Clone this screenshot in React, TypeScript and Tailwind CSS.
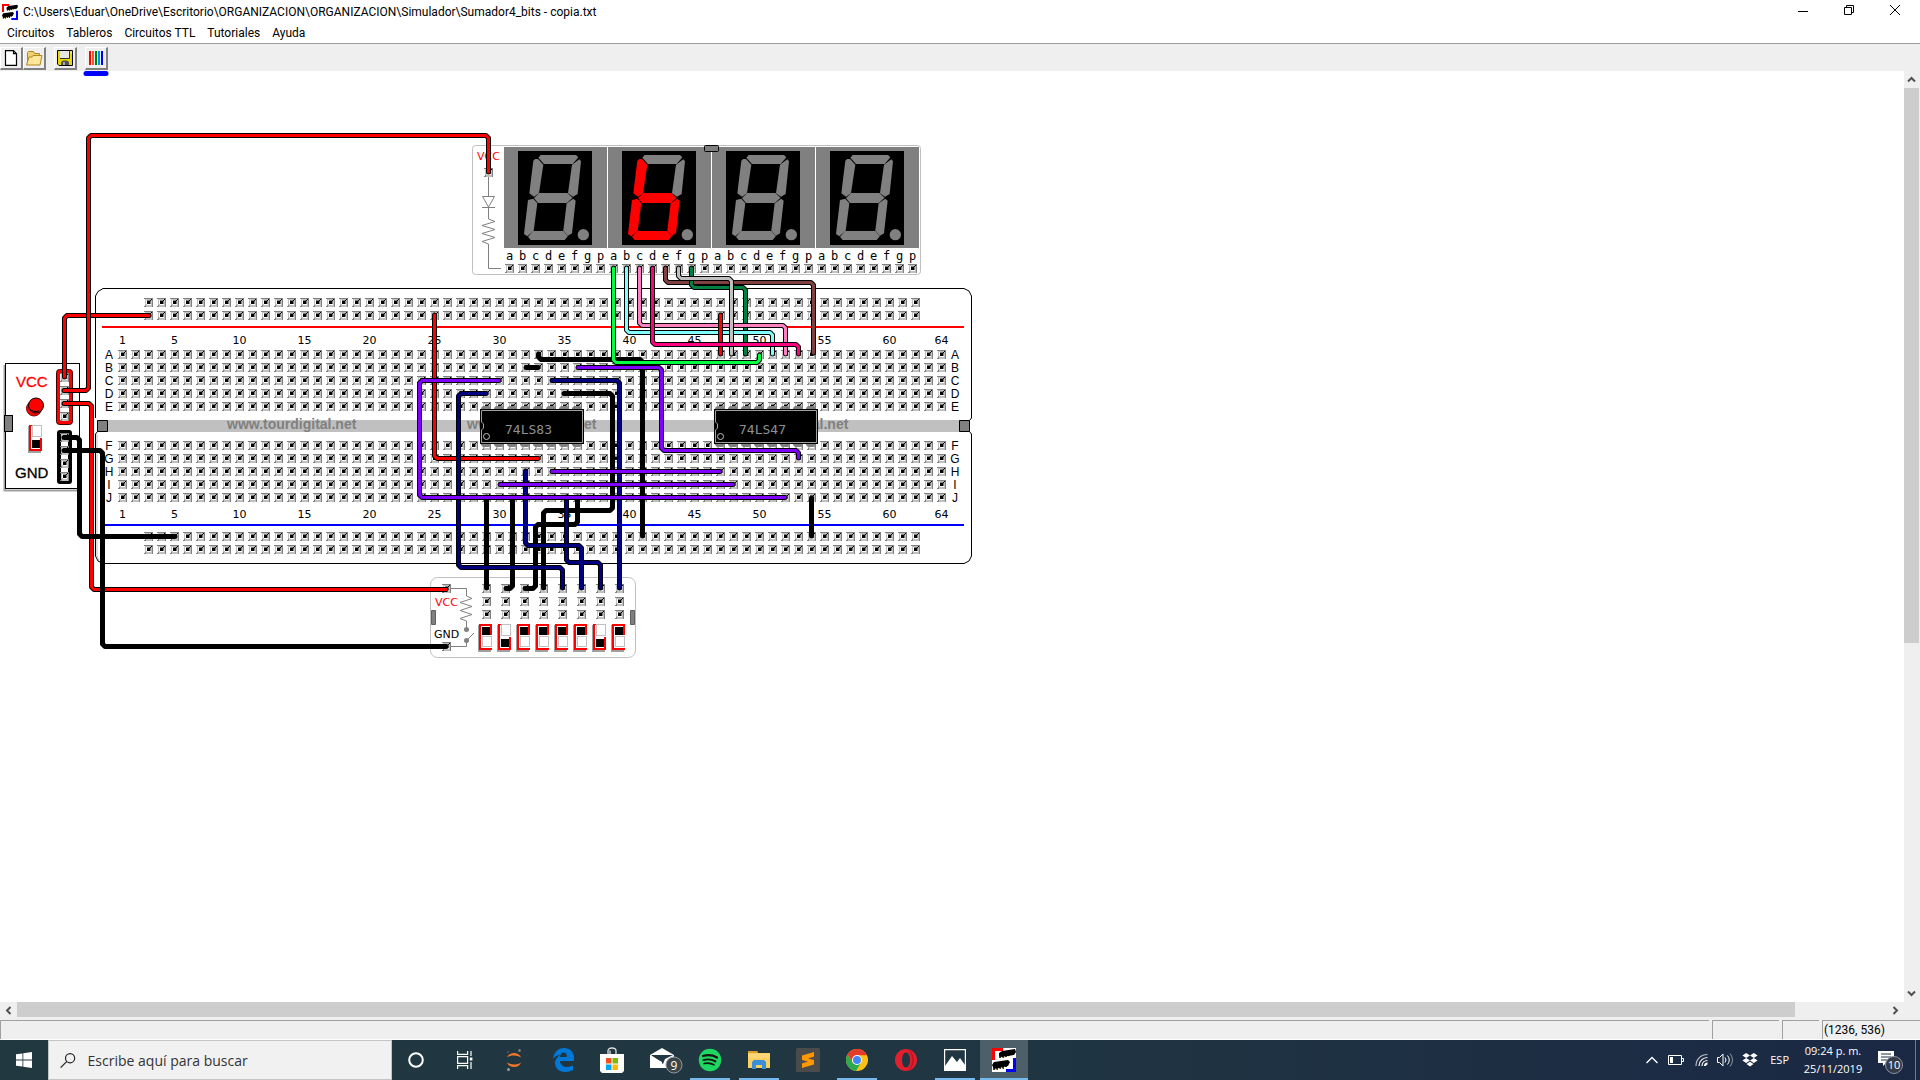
import React from "react";

type Pt = [number, number];

/* ---------- breadboard geometry ---------- */

const col = (n: number) => 122.5 + 13 * (n - 1);
const ROWS: [string, number][] = [
  ["A", 354.5], ["B", 367.5], ["C", 380.5], ["D", 393.5], ["E", 406.5],
  ["F", 445.5], ["G", 458.5], ["H", 471.5], ["I", 484.5], ["J", 497.5],
];
const RAILS = [302.5, 315.5, 536.5, 549.5];
const NUMBERS = [1, 5, 10, 15, 20, 25, 30, 35, 40, 45, 50, 55, 60, 64];
const range = (n: number) => Array.from({ length: n }, (_, i) => i);

function wirePath(pts: Pt[]) {
  const c = 2.5;
  let d = `M${pts[0][0]} ${pts[0][1]}`;
  for (let i = 1; i < pts.length; i++) {
    const [x, y] = pts[i];
    if (i === pts.length - 1) {
      d += `L${x} ${y}`;
      break;
    }
    const [px, py] = pts[i - 1];
    const [nx, ny] = pts[i + 1];
    d += `L${x + Math.sign(px - x) * c} ${y + Math.sign(py - y) * c}`;
    d += `L${x + Math.sign(nx - x) * c} ${y + Math.sign(ny - y) * c}`;
  }
  return d;
}

function Wire({ color, pts }: { color: string; pts: Pt[] }) {
  const d = wirePath(pts);
  return (
    <g fill="none" strokeLinejoin="round" strokeLinecap="round">
      <path d={d} stroke="#000" strokeWidth="5" />
      <path d={d} stroke={color} strokeWidth="3" />
    </g>
  );
}

const RED = "#ff0000";
const BLACK = "#000000";
const NAVY = "#000080";
const PURPLE = "#8000ff";

const WIRES: { color: string; pts: Pt[] }[] = [
  { color: RED, pts: [[149, 315.5], [64.5, 315.5], [64.5, 377]] },
  { color: RED, pts: [[64, 390.5], [88.5, 390.5], [88.5, 135.5], [488.5, 135.5], [488.5, 172]] },
  { color: RED, pts: [[64, 403.5], [91.5, 403.5], [91.5, 589.5], [446, 589.5]] },
  { color: BLACK, pts: [[64, 437.5], [79.5, 437.5], [79.5, 536.5], [175, 536.5]] },
  { color: BLACK, pts: [[64, 450.5], [102.5, 450.5], [102.5, 646.5], [446, 646.5]] },
  { color: RED, pts: [[434.5, 315], [434.5, 458.5], [538, 458.5]] },
  { color: BLACK, pts: [[564, 393.5], [612.5, 393.5], [612.5, 510.5], [543.5, 510.5], [543.5, 588]] },
  { color: BLACK, pts: [[538.5, 354], [538.5, 359.5], [642.5, 359.5], [642.5, 536]] },
  { color: BLACK, pts: [[526, 367.5], [538, 367.5]] },
  { color: BLACK, pts: [[486.5, 497], [486.5, 588]] },
  { color: BLACK, pts: [[512.5, 497], [512.5, 588.5], [506, 588.5]] },
  { color: BLACK, pts: [[577.5, 497], [577.5, 524.5], [535.5, 524.5], [535.5, 588.5], [525, 588.5]] },
  { color: BLACK, pts: [[811.5, 498], [811.5, 536]] },
  { color: NAVY, pts: [[486, 393.5], [458.5, 393.5], [458.5, 567.5], [562.5, 567.5], [562.5, 588]] },
  { color: NAVY, pts: [[552, 380.5], [619.5, 380.5], [619.5, 588]] },
  { color: NAVY, pts: [[566.5, 497], [566.5, 562.5], [600.5, 562.5], [600.5, 588]] },
  { color: NAVY, pts: [[525.5, 471], [525.5, 545.5], [581.5, 545.5], [581.5, 588]] },
  { color: PURPLE, pts: [[499, 380.5], [419.5, 380.5], [419.5, 497.5], [785, 497.5]] },
  { color: PURPLE, pts: [[578, 367.5], [661.5, 367.5], [661.5, 450.5], [798.5, 450.5], [798.5, 458]] },
  { color: PURPLE, pts: [[552, 471.5], [720, 471.5]] },
  { color: PURPLE, pts: [[500, 484.5], [733, 484.5]] },
  { color: "#804040", pts: [[665.5, 268], [665.5, 282.5], [813.5, 282.5], [813.5, 353]] },
  { color: "#008040", pts: [[691.5, 268], [691.5, 287.5], [745.5, 287.5], [745.5, 354]] },
  { color: "#ff80c0", pts: [[639.5, 268], [639.5, 325.5], [785.5, 325.5], [785.5, 354]] },
  { color: "#80ffff", pts: [[626.5, 268], [626.5, 332.5], [772.5, 332.5], [772.5, 354]] },
  { color: RED, pts: [[720.5, 315], [720.5, 354]] },
  { color: "#c0c0c0", pts: [[678.5, 268], [678.5, 278.5], [731.5, 278.5], [731.5, 354]] },
  { color: "#ff0080", pts: [[652.5, 268], [652.5, 344.5], [798.5, 344.5], [798.5, 354]] },
  { color: "#00ff40", pts: [[613.5, 268], [613.5, 362.5], [759.5, 362.5], [759.5, 355]] },
];

function Hole({ x, y }: { x: number; y: number }) {
  return <use href="#hole" x={x} y={y} />;
}

function HoleSymbol() {
  return (
    <defs>
      <g id="hole" shapeRendering="crispEdges">
        <path d="M-3.5-4.5h8v9h-8z" fill="#c0c0c0" />
        <path d="M-4.5-4.5h9v1h-9zM3.5-4.5h1v9h-1zM-4.5 3.5h2v1h-2zM-3.5 2.5h1v1h-1z" fill="#808080" />
        <path d="M-2.5-2.5h1v4h-1zM-1.5 1.5h4v1h-4z" fill="#fff" />
        <path d="M-1.5-2.5h4v1h-4zM1.5-1.5h1v3h-1z" fill="#808080" />
        <path d="M-1.5-1.5h3v3h-3zM1.5-2.5h1v1h-1zM2.5-3.5h1v1h-1z" fill="#000" />
      </g>
    </defs>
  );
}

function Board() {
  return (
    <g>
      <path
        d="M95.5 418V296L98 291.5L103 288.5H964L969 291L971.5 296V418L969.5 420.5M969.5 431.5L971.5 434V556L969 561L964 563.5H103L98 561L95.5 556V434L97.5 431.5"
        fill="none"
        stroke="#000"
      />
      <path d="M97 434V556L99 560" fill="none" stroke="#c0c0c0" />
      <rect x="107" y="420" width="853" height="12" fill="#c0c0c0" />
      {[227, 467, 719].map((x) => (
        <text key={x} x={x} y="429" fontFamily="Liberation Sans, sans-serif" fontWeight="700" fontSize="14" fill="#808080">
          www.tourdigital.net
        </text>
      ))}
      <path d="M97.5 420.5h10v11h-10zM959.5 420.5h10v11h-10z" fill="#808080" stroke="#000" />
      <rect x="102" y="326" width="862" height="2" fill="#ff0000" />
      <rect x="105" y="524" width="859" height="2" fill="#0000ff" />
      {[344, 518].map((y) =>
        NUMBERS.map((n) => (
          <text key={`${y}-${n}`} x={col(n)} y={y} textAnchor="middle" fontFamily="DejaVu Sans, sans-serif" fontSize="11">
            {n}
          </text>
        ))
      )}
      {ROWS.map(([l, y]) => (
        <g key={l} fontFamily="Liberation Sans, sans-serif" fontSize="12" textAnchor="middle">
          <text x="109" y={y + 4}>{l}</text>
          <text x="955" y={y + 4}>{l}</text>
          {range(64).map((i) => <Hole key={i} x={col(i + 1)} y={y} />)}
        </g>
      ))}
      {RAILS.map((y) => range(60).map((i) => <Hole key={`${y}-${i}`} x={col(i + 3)} y={y} />))}
    </g>
  );
}

function Chip({ x, label }: { x: number; label: string }) {
  return (
    <g transform={`translate(${x} 409)`}>
      {range(8).map((i) => (
        <path key={i} d={`M${1 + i * 13} 1v-2l2-2h6l2 2v2zM${1 + i * 13} 34v2l2 2h6l2-2v-2z`} fill="#808080" />
      ))}
      <rect x="0" y="0" width="104" height="35" fill="#000" />
      <path d="M1.5 1.5H102.5V33.5H1.5V21L3.5 19V15L1.5 13Z" fill="#000" stroke="#a0a0a0" />
      <circle cx="6.5" cy="27.5" r="3" fill="none" stroke="#c0c0c0" />
      <text x="25" y="25" fontFamily="DejaVu Sans Mono, monospace" fontSize="13" fill="#909090">
        {label}
      </text>
    </g>
  );
}

const SEGMENTS: Record<string, string> = {
  a: "362,105 468,105 475,112 458,132 372,132 355,113",
  b: "478,118 483,124 473,222 459,230 444,220 456,134",
  c: "460,236 467,242 456,340 444,347 430,332 440,250",
  d: "340,333 430,333 444,348 434,360 332,360 324,350",
  e: "340,236 352,250 341,333 322,349 312,342 324,240",
  f: "346,117 354,117 370,134 357,220 342,230 328,220 340,122",
  g: "342,234 358,219 442,219 458,233 440,249 354,249",
};

function Digit({ index, lit }: { index: number; lit: string }) {
  return (
    <g transform={`translate(${index * 104} 0)`}>
      <rect x="504" y="147" width="103" height="101" fill="#808080" />
      <rect x="518" y="151" width="74" height="94" fill="#000" />
      <g transform="translate(420 120) scale(.3333)">
        {Object.entries(SEGMENTS).map(([k, p]) => (
          <polygon key={k} points={p} fill={lit.includes(k) ? "#ff0000" : "#808080"} />
        ))}
        <circle cx="490" cy="344" r="17" fill="#808080" />
      </g>
    </g>
  );
}

function DisplayModule() {
  return (
    <g>
      <rect x="472.5" y="145.5" width="448" height="129" rx="3" fill="#fff" stroke="#c0c0c0" />
      <text x="477" y="160" fontFamily="DejaVu Sans, sans-serif" fontSize="11" fill="#ff0000">VCC</text>
      <Hole x={488.5} y={172.5} />
      <path
        d="M488.5 177V196M482.5 196.5H494.5L488.5 207ZM482 207.5H495M488.5 208V219L495 221.5L482 225.5L495 229.5L482 233.5L495 237.5L482 241.5L488.5 244V268.5H501"
        fill="none"
        stroke="#808080"
      />
      <Digit index={0} lit="" />
      <Digit index={1} lit="cdefg" />
      <Digit index={2} lit="" />
      <Digit index={3} lit="" />
      <rect x="704.5" y="145.5" width="14" height="6" rx="1" fill="#808080" stroke="#000" />
      {range(32).map((i) => (
        <g key={i}>
          <text x={509.5 + i * 13} y="260" textAnchor="middle" fontFamily="DejaVu Sans Mono, monospace" fontSize="12">
            {"abcdefgp"[i % 8]}
          </text>
          <Hole x={509.5 + i * 13} y={268.5} />
        </g>
      ))}
    </g>
  );
}

function DipSwitch({ x, y, up }: { x: number; y: number; up: boolean }) {
  return (
    <g transform={`translate(${x} ${y})`} shapeRendering="crispEdges">
      <rect x="-1" y="1" width="13" height="27" fill="#a0a0a0" />
      <rect x="0" y="0" width="13" height="26" fill="#fff" />
      <path d="M0 0h2v26h-2zM0 24h13v2h-13z" fill="#ff0000" />
      {up ? (
        <>
          <path d="M0 0h13v11h-2v-9h-11z" fill="#ff0000" />
          <rect x="3" y="3" width="8" height="8" fill="#000" />
          <path d="M3.5 12.5h9v10h-9z" fill="none" stroke="#c0c0c0" />
        </>
      ) : (
        <>
          <path d="M0 0h3v1h-3zM11 13h2v12h-2z" fill="#ff0000" />
          <path d="M3.5 .5h9v11h-9z" fill="none" stroke="#c0c0c0" />
          <rect x="3" y="15" width="8" height="8" fill="#000" />
        </>
      )}
    </g>
  );
}

function PowerSupply() {
  return (
    <g>
      <path d="M4.5 365V490.5H79" fill="none" stroke="#a0a0a0" strokeWidth="2" />
      <rect x="5.5" y="363.5" width="74" height="125" fill="#fff" stroke="#000" />
      <g fontFamily="Liberation Sans, sans-serif" fontSize="15" strokeWidth=".3">
        <text x="16" y="387" fill="#ff0000" stroke="#ff0000">VCC</text>
        <text x="15" y="478" stroke="#000">GND</text>
      </g>
      <rect x="4.5" y="415.5" width="8" height="16" fill="#808080" stroke="#000" />
      <circle cx="34" cy="408.5" r="7.5" fill="#ff0000" stroke="#800000" />
      <circle cx="36" cy="405.5" r="7.5" fill="#ff0000" stroke="#000" />
      <path d="M29 408q4 5 10 3" fill="none" stroke="#000" />
      <DipSwitch x={29} y={425} up={false} />
      <rect x="56.5" y="369.5" width="16" height="55" rx="3" fill="#ff0000" stroke="#400000" />
      <rect x="60" y="373" width="9" height="48" fill="#fff" />
      <rect x="59" y="432" width="11" height="50" rx="1" fill="#fff" stroke="#000" strokeWidth="4" />
      {[377.5, 390.5, 403.5, 416.5, 437.5, 450.5, 463.5, 476.5].map((y) => <Hole key={y} x={64.5} y={y} />)}
    </g>
  );
}

function SwitchModule() {
  return (
    <g>
      <rect x="430.5" y="577.5" width="205" height="80" rx="7" fill="#fff" stroke="#c0c0c0" />
      <path d="M431.5 610.5h4v14h-4zM630.5 610.5h4v14h-4z" fill="#808080" stroke="#606060" />
      <g fontFamily="DejaVu Sans, sans-serif" fontSize="11">
        <text x="435" y="606" fill="#ff0000">VCC</text>
        <text x="434" y="638">GND</text>
      </g>
      <Hole x={446.5} y={588.5} />
      <Hole x={446.5} y={646.5} />
      <path
        d="M451 588.5H466.5V596L472 598.5L460 602.5L472 606.5L460 610.5L472 614.5L460 618.5L466.5 621V628M466.5 640.5L474 633M466.5 640V646.5H451"
        fill="none"
        stroke="#808080"
      />
      <circle cx="466.5" cy="629.5" r="2.5" fill="#808080" />
      <circle cx="466.5" cy="640.5" r="2.5" fill="#808080" />
      {range(8).map((i) => (
        <g key={i}>
          {[588.5, 601.5, 614.5].map((y) => <Hole key={y} x={486.5 + 19 * i} y={y} />)}
          <DipSwitch x={479 + 19 * i} y={624} up={i !== 1 && i !== 6} />
        </g>
      ))}
    </g>
  );
}

function Circuit() {
  return (
    <svg width="980" height="600" viewBox="0 71 980 600" className="block" role="img" aria-label="Protoboard">
      <HoleSymbol />
      <path d="M86 73.5H106" stroke="#0000ff" strokeWidth="5" strokeLinecap="round" />
      <Board />
      <DisplayModule />
      <PowerSupply />
      <SwitchModule />
      <Chip x={480} label="74LS83" />
      <Chip x={714} label="74LS47" />
      {WIRES.map((w, i) => <Wire key={i} {...w} />)}
    </svg>
  );
}

/* ---------- window chrome ---------- */

function AppIcon({ size }: { size: number }) {
  return (
    <svg width={size} height={size} viewBox="0 0 24 24" aria-hidden="true">
      <rect width="24" height="24" fill="#fff" />
      <path d="M1.5 12V1.5H11" fill="none" stroke="#ff0000" strokeWidth="3" />
      <path d="M22.5 10V22.5H14" fill="none" stroke="#0000ff" strokeWidth="3" />
      <path d="M7 5l3-2 13-2 1 3-2 3-13 2-2-1zM0 17l2-3 14-2 2 2-2 4-14 3z" fill="#000" />
      <path d="M8 6v4M11 6v4M14 6v3M17 5v3M2 18v4M5 18v4M8 17v4M11 17v4M14 16v3" stroke="#000" strokeWidth="1.5" />
      <path d="M9.5 9.5h1M12.5 9.500h1M15.5 8.5h1M3.5 21.500h1M6.5 20.500h1M9.5 20.500h1" stroke="#e8e070" />
    </svg>
  );
}

function Chevron({ d }: { d: string }) {
  return (
    <svg width="9" height="9" viewBox="0 0 9 9" fill="none" stroke="#505050" strokeWidth="2" aria-hidden="true">
      <path d={d} />
    </svg>
  );
}

function TitleBar() {
  return (
    <header className="flex h-[23px] items-center bg-white pr-0.5 pl-0.5 text-[12px] text-black">
      <AppIcon size={16} />
      <h1 className="ml-[5px] flex-1 whitespace-nowrap">
        C:\Users\Eduar\OneDrive\Escritorio\ORGANIZACION\ORGANIZACION\Simulador\Sumador4_bits - copia.txt
      </h1>
      <button aria-label="Minimizar" className="flex h-full w-[46px] items-center justify-center">
        <svg width="10" height="10" stroke="#000"><path d="M0 4.500h10" /></svg>
      </button>
      <button aria-label="Restaurar" className="flex h-full w-[46px] items-center justify-center pb-1">
        <svg width="10" height="10" fill="none" stroke="#000"><path d="M.5 2.500h7v7h-7zM2.500 2.500v-2h7v7h-2" /></svg>
      </button>
      <button aria-label="Cerrar" className="flex h-full w-[46px] items-center justify-center pb-1">
        <svg width="10" height="10" stroke="#000"><path d="M0 0l10 10M10 0L0 10" /></svg>
      </button>
    </header>
  );
}

function MenuBar() {
  return (
    <nav className="flex h-5 items-center bg-white pl-px text-[12px] text-black">
      {["Circuitos", "Tableros", "Circuitos TTL", "Tutoriales", "Ayuda"].map((m) => (
        <button key={m} className="px-1.5 leading-5">{m}</button>
      ))}
    </nav>
  );
}

function ToolButton({ label, children }: { label: string; children: React.ReactNode }) {
  return (
    <button
      aria-label={label}
      className="flex h-[23px] w-[23px] items-center justify-center border-t border-l border-r-2 border-b-2 border-t-white border-l-white border-r-[#808080] border-b-[#808080] bg-[#efefef]"
    >
      {children}
    </button>
  );
}

function Toolbar() {
  return (
    <div role="toolbar" className="flex h-7 items-center border-t border-[#a0a0a0] bg-[#efefef] pt-0.5">
      <ToolButton label="Nuevo">
        <svg width="16" height="16" viewBox="0 0 16 16" fill="#fff" stroke="#000" strokeWidth="1.2"><path d="M2.500.7h8l3 3V15.300h-11zM10.500.7v3h3" /></svg>
      </ToolButton>
      <ToolButton label="Abrir">
        <svg width="18" height="16" viewBox="0 0 18 16" stroke="#b08820">
          <path d="M2.500 14.500v-12l1-1h5l1 2h5v11z" fill="#f0d070" />
          <path d="M1.500 15l2.500-8h3l1-1.500h9l-2 9.500z" fill="#ffe69a" />
        </svg>
      </ToolButton>
      <span className="w-2" />
      <ToolButton label="Guardar">
        <svg width="16" height="16" viewBox="0 0 16 16">
          <path d="M.5.500h15v15H2l-1.500-1.500z" fill="#e8d800" stroke="#000" />
          <path d="M3 1h9v7H3z" fill="#e4e4e4" /><path d="M3 8.500h9.500V1" fill="none" stroke="#303030" />
          <path d="M13.500 1.500h1v2h-1z" fill="#fff" />
          <path d="M4 15v-3l2-1.500h4l2 1.500v3z" fill="#505050" /><path d="M6 12h2v3H6z" fill="#aaa" />
        </svg>
      </ToolButton>
      <span className="w-2" />
      <ToolButton label="Cables">
        <svg width="16" height="16" viewBox="0 0 16 16">
          <path d="M1 1h2v14H1z" fill="#f00" /><path d="M4 1h2v14H4z" fill="#e06030" /><path d="M7 1h2v14H7z" fill="#008000" />
          <path d="M10 1h2v14h-2z" fill="#0090ff" /><path d="M13 1h2v14h-2z" fill="#00f" />
        </svg>
      </ToolButton>
    </div>
  );
}

function StatusBar() {
  return (
    <footer className="flex h-[22px] gap-[3px] border-b border-white bg-[#efefef] pt-0.5 text-[12px] text-black">
      <div className="flex-1 border-t border-l border-[#a0a0a0]" />
      <div className="w-[67px] border-t border-l border-[#a0a0a0]" />
      <div className="w-[37px] border-t border-l border-[#a0a0a0]" />
      <div className="w-[98px] border-t border-l border-[#a0a0a0] pl-px leading-[18px]">(1236, 536)</div>
    </footer>
  );
}

/* ---------- taskbar ---------- */

function TaskButton({ label, running, active, children }: { label: string; running?: boolean; active?: boolean; children: React.ReactNode }) {
  return (
    <button aria-label={label} className={`relative flex h-10 w-12 items-center justify-center ${active ? "bg-[#4d5f69]" : ""}`}>
      {children}
      {running && <span className={`absolute bottom-0 h-0.5 bg-[#76b9ed] ${active ? "inset-x-0" : "inset-x-1"}`} />}
    </button>
  );
}

function Taskbar() {
  return (
    <div className="flex h-10 bg-linear-to-r from-[#213840] via-[#203642] to-[#1b2844] font-['Open_Sans','Noto_Sans',sans-serif] text-white">
      <button aria-label="Inicio" className="flex w-12 items-center justify-center">
        <svg width="16" height="16" viewBox="0 0 16 16" fill="#fff"><path d="M0 2.300l6.500-.9v6.200H0zM7.300 1.300L16 0v7.600H7.300zM0 8.400h6.500v6.200L0 13.700zM7.300 8.400H16V16l-8.700-1.300z" /></svg>
      </button>
      <label className="flex w-[344px] items-center border border-[#c4c4c4] bg-[#f1f1f1] pl-[11px]">
        <svg width="17" height="17" viewBox="0 0 17 17" fill="none" stroke="#222" strokeWidth="1.3"><circle cx="11" cy="6" r="5" /><path d="M7.500 9.500L.7 16.300" /></svg>
        <input aria-label="Buscar" placeholder="Escribe aquí para buscar" className="ml-3 w-full bg-transparent text-[14px] outline-none placeholder:text-[#333333]" />
      </label>
      <div className="flex gap-px">
        <TaskButton label="Cortana"><svg width="18" height="18" fill="none" stroke="#fff" strokeWidth="2"><circle cx="9" cy="9" r="6.800" /></svg></TaskButton>
        <TaskButton label="Vista de tareas">
          <svg width="16" height="18" viewBox="0 0 16 18" fill="none" stroke="#fff" strokeWidth="1.2"><path d="M.6 0v3.400h10V0M.6 18v-3.400h10V18M.6 5.600h10v6.800H.6zM14 0v5M14 11v7" /><path d="M12.800 6.500h2.600v3h-2.600z" fill="#fff" stroke="none" /></svg>
        </TaskButton>
        <TaskButton label="Jupyter">
          <svg width="18" height="24" viewBox="0 0 18 24"><path d="M2 9.500C4 3.500 14 3.500 16 9.500 12 6.800 6 6.800 2 9.500zM2 14.500c2 6 12 6 14 0-4 2.700-10 2.700-14 0z" fill="#f37726" /><circle cx="14.5" cy="2.5" r="1.3" fill="#888" /><circle cx="3.5" cy="21.5" r="1.5" fill="#999" /><circle cx="3" cy="4" r=".8" fill="#777" /></svg>
        </TaskButton>
        <TaskButton label="Edge">
          <svg width="21" height="24" viewBox="0 0 21 24"><path d="M0 11C1 4 5 0 11 0c6 0 10 4 10 10v3H7c0 4 4 6 7 6 2 0 4-.5 6-1.500V22c-2 1-5 2-8 2-6 0-10-4-10-9 0-3 2-6 5-8-3 0-5.500 2-7 4zm7-2h7c0-3-1-4.500-3.500-4.500S7.500 6 7 9z" fill="#0078d7" /></svg>
        </TaskButton>
        <TaskButton label="Microsoft Store">
          <svg width="24" height="26" viewBox="0 0 24 26"><path d="M8 8V4q0-3 4-3t4 3v4M10 8V3.500" fill="none" stroke="#ddd" strokeWidth="1.3" /><path d="M0 7h24v17l-2 2H2l-2-2z" fill="#fff" /><path d="M6 11h5.500v5.500H6z" fill="#f25022" /><path d="M12.500 11H18v5.500h-5.500z" fill="#7fba00" /><path d="M6 17.500h5.500V23H6z" fill="#00a4ef" /><path d="M12.500 17.500H18V23h-5.500z" fill="#ffb900" /></svg>
        </TaskButton>
        <TaskButton label="Correo">
          <svg width="34" height="28" viewBox="0 0 34 28" className="ml-2.5"><path d="M1 9L13 2l12 7v13H1z" fill="#fff" /><path d="M2 9h22l-8 4-2 5z" fill="#213842" /><path d="M1 9l12 7v6H1z" fill="#fff" /><circle cx="25" cy="19" r="8" fill="#3b4549" stroke="#90989c" /><text x="25" y="23.500" textAnchor="middle" fontSize="12" fill="#fff">9</text></svg>
        </TaskButton>
        <TaskButton label="Spotify" running>
          <svg width="24" height="24" viewBox="0 0 24 24"><circle cx="12" cy="12" r="11.2" fill="#1ed760" /><g fill="none" stroke="#191414" strokeLinecap="round"><path d="M5 8c5-1.500 10-.8 14 1.500" strokeWidth="2.2" /><path d="M5.500 12c4-1 8.500-.6 12 1.400" strokeWidth="1.9" /><path d="M6 15.500c4-.8 7-.4 10 1.300" strokeWidth="1.6" /></g></svg>
        </TaskButton>
        <TaskButton label="Explorador de archivos" running>
          <svg width="22" height="20" viewBox="0 0 22 20"><path d="M0 1h9l1 2h12v15H0z" fill="#f8cf60" /><path d="M0 1h9l1 2H0z" fill="#dca02c" /><path d="M0 4h22v4H0z" fill="#ffe08a" opacity=".5" /><path d="M4 19v-7l2-2h10l2 2v7h-4v-4H8v4z" fill="#3a8fd8" /></svg>
        </TaskButton>
        <TaskButton label="Sublime Text">
          <svg width="24" height="24" viewBox="0 0 24 24"><rect width="24" height="24" rx="1.5" fill="#4b4b4b" /><path d="M18 4v4.500l-6 2 6 1.500v4.500L6 20v-4.500l6-2L6 12V7.500z" fill="#ff9800" /></svg>
        </TaskButton>
        <TaskButton label="Chrome" running>
          <svg width="22" height="22" viewBox="0 0 22 22"><circle cx="11" cy="11" r="11" fill="#fbc116" /><path d="M1.500 5.500A11 11 0 0 1 20.500 5.500L21 6.300H11L6.500 13.500z" fill="#e33b2e" /><path d="M1.500 5.500A11 11 0 0 0 10 22l5-8.500H6.300z" fill="#2da94f" /><circle cx="11" cy="11" r="5" fill="#fff" /><circle cx="11" cy="11" r="4" fill="#4285f4" /></svg>
        </TaskButton>
        <TaskButton label="Opera">
          <svg width="22" height="22" viewBox="0 0 22 22"><path fillRule="evenodd" d="M11 0a11 11 0 1 0 0 22 11 11 0 1 0 0-22zM11 3.500c2.500 0 4 3.500 4 7.500s-1.500 7.500-4 7.500S7 15 7 11s1.500-7.500 4-7.500z" fill="#e0202c" /><path d="M12 1c4 0 7 4 7 10s-3 10-7 10c3-1 5-5 5-10s-2-9-5-10z" fill="#a80016" opacity=".45" /></svg>
        </TaskButton>
        <TaskButton label="Fotos" running>
          <svg width="22" height="22" viewBox="0 0 22 22"><path d="M.6.600h20.800v20.800H.6z" fill="none" stroke="#fff" strokeWidth="1.2" /><path d="M1 17l7-10 5 6 3-4 5 7v5H1z" fill="#fff" /></svg>
        </TaskButton>
        <TaskButton label="Simulador" running active><AppIcon size={24} /></TaskButton>
      </div>
      <div className="ml-auto flex items-center text-[12px]">
        <svg width="12" height="8" className="mr-2.5" fill="none" stroke="#fff" strokeWidth="1.4"><path d="M.5 7L6 1.500 11.500 7" /></svg>
        <svg width="16" height="10" className="mr-[11px]" fill="none" stroke="#fff"><path d="M.5.500h13v9H.5zM14 3.500h1.500v3H14" /><path d="M2 2h3v6H2z" fill="#fff" stroke="none" /></svg>
        <svg width="14" height="14" className="mr-2" fill="none" stroke="#fff" strokeWidth="1.2"><path d="M1 13C1 6 6 1.500 12.500 1.500" opacity=".7" /><path d="M4 13c0-5 4-8.500 8.500-8.500M7 13c0-3.500 2.500-5.500 5.500-5.500" /><path d="M10 13c0-1.500 1-2.500 2.500-2.500" strokeWidth="2" /></svg>
        <svg width="17" height="14" className="mr-2" fill="none" stroke="#fff"><path d="M.5 4.500h2L6 1v12L2.500 9.500h-2zM8 4.500q2 2.500 0 5M10.500 2.500q3.500 4.500 0 9" /><path d="M13 .5q5 6.500 0 13" opacity=".5" /></svg>
        <svg width="16" height="14" viewBox="0 0 16 14" className="mr-3" fill="#fff"><path d="M4.200 0L8 2.500 4.200 5 .4 2.500zM11.800 0l3.800 2.500L11.800 5 8 2.500zM4.200 5L8 7.500 4.200 10 .4 7.500zM11.800 5l3.800 2.500-3.800 2.500L8 7.500zM8 8.800l3.500 2.300L8 13.500l-3.500-2.400z" /></svg>
        <span className="mr-[14px] text-[11px]">ESP</span>
        <div className="w-[60px] whitespace-nowrap text-center text-[11px] leading-[18px]">
          <div>09:24 p. m.</div>
          <div>25/11/2019</div>
        </div>
        <svg width="28" height="26" viewBox="0 0 28 26" className="mt-1 ml-3.5" aria-label="Notificaciones"><path d="M1 2h16v12H9l-3 3v-3H1z" fill="#fff" /><path d="M4 5h10M4 8h10M4 11h6" stroke="#1d2c44" /><circle cx="17" cy="16" r="8.5" fill="#343b48" stroke="#8a909c" /><text x="17" y="20" textAnchor="middle" fontSize="11" fill="#fff">10</text></svg>
        <span className="mr-1 ml-2.5 h-10 w-px bg-[#6f7a90]" />
      </div>
    </div>
  );
}

export default function App() {
  return (
    <div className="flex h-screen flex-col overflow-hidden bg-white font-[Roboto,'Noto_Sans',sans-serif]">
      <TitleBar />
      <MenuBar />
      <Toolbar />
      <div className="flex min-h-0 flex-1">
        <main className="min-w-0 flex-1 overflow-hidden bg-white">
          <Circuit />
        </main>
        <div className="flex w-4 flex-col bg-[#efefef]">
          <button aria-label="Subir" className="flex h-[17px] items-center justify-center pr-px"><Chevron d="M1 6.500L4.500 3 8 6.500" /></button>
          <div className="h-[555px] w-[15px] bg-[#cdcdcd]" />
          <button aria-label="Bajar" className="mt-auto flex h-[17px] items-center justify-center pr-px"><Chevron d="M1 2.500L4.500 6 8 2.500" /></button>
        </div>
      </div>
      <div className="flex h-4 items-center bg-[#efefef] pr-4">
        <button aria-label="Izquierda" className="flex h-4 w-[17px] items-center justify-center"><Chevron d="M6.500 1L3 4.500 6.500 8" /></button>
        <div className="mr-[92px] h-[15px] flex-1 self-start bg-[#cdcdcd]" />
        <button aria-label="Derecha" className="flex h-4 w-[17px] items-center justify-center"><Chevron d="M2.500 1L6 4.500 2.500 8" /></button>
      </div>
      <StatusBar />
      <Taskbar />
    </div>
  );
}
